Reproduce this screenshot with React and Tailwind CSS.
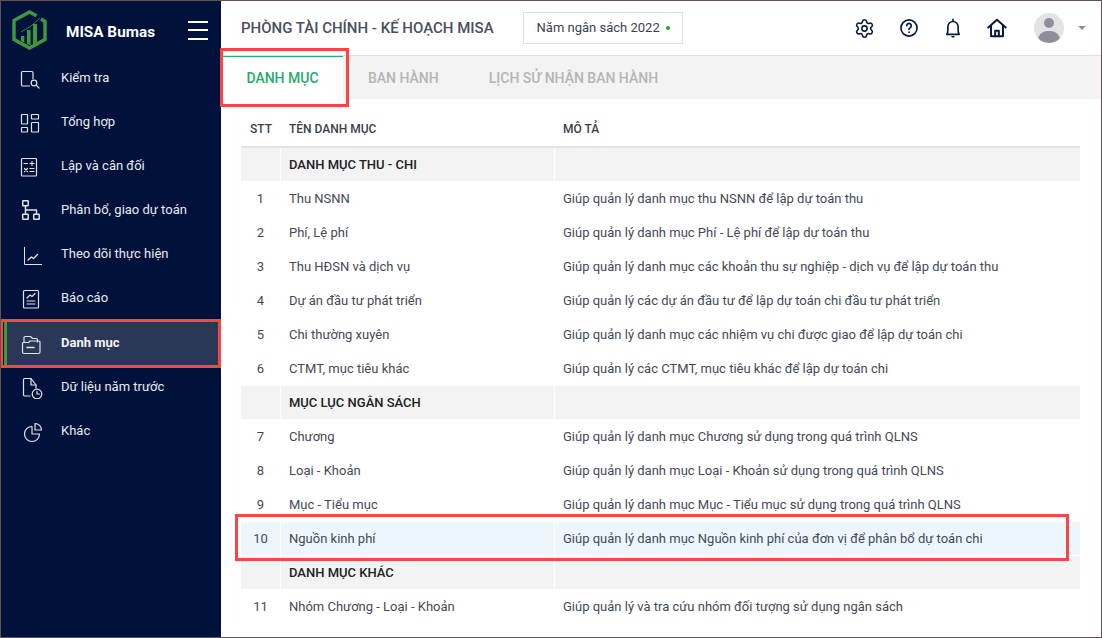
import React from "react";
import { Settings } from "lucide-react";

const I = ({ children, size = 24, sw = 1.2 }) => (
  <svg width={size} height={size} viewBox="0 0 24 24" fill="none" stroke="currentColor" strokeWidth={sw} strokeLinecap="round" strokeLinejoin="round" className="block">
    {children}
  </svg>
);

const menu = [
  ["Kiểm tra", <I key="a"><path d="M10.500 20H3.500A1.300 1.300 0 0 1 2.500 18.700V6.300A1.300 1.300 0 0 1 3.500 5.500h9.500A1.300 1.300 0 0 1 14 6.800v6" /><circle cx="15" cy="17" r="2.800" /><path d="m17.200 19.200 2.800 2.800" /></I>],
  ["Tổng hợp", <I key="b"><rect x="2.500" y="4.500" width="6" height="9.500" rx=".4" /><rect x="12.500" y="4.500" width="7" height="4.500" rx=".4" /><rect x="2.500" y="17.500" width="6" height="4.500" rx=".4" /><rect x="12.500" y="12.500" width="7" height="9.500" rx=".4" /></I>],
  ["Lập và cân đối", <I key="c"><rect x="2.500" y="4.500" width="15" height="17.500" rx=".8" /><path d="M5 9.500h3.500M11 9.500h4M13 7.500v4M5.500 14.500l3 3M8.500 14.500l-3 3M11 14.500h4M11 17.500h4" /></I>],
  ["Phân bổ, giao dự toán", <I key="d" sw={1.500}><rect x="3.700" y="2.700" width="5.500" height="5" rx=".5" /><rect x="3.700" y="16.300" width="5.500" height="5" rx=".5" /><rect x="14.700" y="16.300" width="5.500" height="5" rx=".5" /><path d="M6.500 7.700v8.600M6.500 12h11v4.300" /></I>],
  ["Theo dõi thực hiện", <I key="e" sw={1}><path d="M5.500 5v17.500h17.500" strokeLinecap="butt" /><path d="M9 18l3.500-3 2 1.500 4-4" strokeWidth={1.300} /></I>],
  ["Báo cáo", <I key="f"><rect x="4.500" y="4.500" width="15" height="17.500" rx=".9" /><path d="M8 12l3-3 2 1.500 3-3M8 15h8M8 18h8" /></I>],
  ["Danh mục", <I key="g"><path d="M5 11V6.800a1.300 1.300 0 0 1 1.300-1.300h5.200l2 2h3.800a1.300 1.300 0 0 1 1.200 1.300v2.200" /><path d="M3.500 21V12.500a1 1 0 0 1 1-1h5l1.500-1.500h9a1 1 0 0 1 1 1v10a1.500 1.500 0 0 1-1.500 1.500H5A1.500 1.500 0 0 1 3.500 21Z" /><path d="M8 16.500h7" strokeWidth={1.500} /></I>],
  ["Dữ liệu năm trước", <I key="h"><path d="M11 21H5.500A1.500 1.500 0 0 1 4.500 19.700V4.500A1.500 1.500 0 0 1 6 3.500h6l5 6.500v3" /><path d="M12 3.500v6.500h5" /><circle cx="18" cy="19" r="4.800" /><path d="M18 16.300V19h2.500" /></I>],
  ["Khác", <I key="i"><path d="M13 7.500a7.500 7.500 0 1 0 7.500 7.500H13V7.500Z" /><path d="M16 4.500a6.500 6.500 0 0 1 6.500 6.500H16V4.500Z" /></I>],
];

const rows = [
  { g: "DANH MỤC THU - CHI" },
  { n: 1, t: "Thu NSNN", d: "Giúp quản lý danh mục thu NSNN để lập dự toán thu" },
  { n: 2, t: "Phí, Lệ phí", d: "Giúp quản lý danh mục Phí - Lệ phí để lập dự toán thu" },
  { n: 3, t: "Thu HĐSN và dịch vụ", d: "Giúp quản lý danh mục các khoản thu sự nghiệp - dịch vụ để lập dự toán thu" },
  { n: 4, t: "Dự án đầu tư phát triển", d: "Giúp quản lý các dự án đầu tư để lập dự toán chi đầu tư phát triển" },
  { n: 5, t: "Chi thường xuyên", d: "Giúp quản lý danh mục các nhiệm vụ chi được giao để lập dự toán chi" },
  { n: 6, t: "CTMT, mục tiêu khác", d: "Giúp quản lý các CTMT, mục tiêu khác để lập dự toán chi" },
  { g: "MỤC LỤC NGÂN SÁCH" },
  { n: 7, t: "Chương", d: "Giúp quản lý danh mục Chương sử dụng trong quá trình QLNS" },
  { n: 8, t: "Loại - Khoản", d: "Giúp quản lý danh mục Loại - Khoản sử dụng trong quá trình QLNS" },
  { n: 9, t: "Mục - Tiểu mục", d: "Giúp quản lý danh mục Mục - Tiểu mục sử dụng trong quá trình QLNS" },
  { n: 10, t: "Nguồn kinh phí", d: "Giúp quản lý danh mục Nguồn kinh phí của đơn vị để phân bổ dự toán chi", hl: true },
  { g: "DANH MỤC KHÁC" },
  { n: 11, t: "Nhóm Chương - Loại - Khoản", d: "Giúp quản lý và tra cứu nhóm đối tượng sử dụng ngân sách" },
];

function Logo() {
  return (
    <svg width="36" height="40" viewBox="0 0 36 40" fill="none" className="block shrink-0">
      <path d="M24.500 5.800 17.500 2 2 10.500V29.500L17.500 38 33 29.500V11.500L29 9" stroke="#3f9a3f" strokeWidth="3.400" />
      <path d="M9 26h3.300v6.500L9 31zM15 20h3.600v15.500L15 34zM21 14h4v18l-4 2.500z" fill="#3f9a3f" />
      <path d="M9 22l10-6 9-8" stroke="#3f9a3f" strokeWidth="0.800" />
    </svg>
  );
}

export default function App() {
  return (
    <div className="relative w-[1102px] h-[638px] overflow-hidden flex bg-white border border-[#5f5353] font-['Roboto',sans-serif] text-[13px] text-[#212121]">
      <aside className="w-[220px] shrink-0 bg-[#00123b] text-white flex flex-col">
        <div className="h-[55px] shrink-0 flex items-center pl-[11px] pr-[13px]">
          <div className="mt-[2px]"><Logo /></div>
          <span className="ml-[18px] text-[15.300px] font-bold mt-[7px]">MISA Bumas</span>
          <div className="ml-auto flex flex-col gap-[6.500px] mt-[3px]">
            <span className="block w-5 h-[2px] bg-white" />
            <span className="block w-5 h-[2px] bg-white" />
            <span className="block w-5 h-[2px] bg-white" />
          </div>
        </div>
        <nav className="flex flex-col">
          {menu.map(([label, icon]) =>
            label === "Danh mục" ? (
              <div key={label} className="h-[46px] -mb-[1px] mx-[3px] pl-[12px] flex items-center gap-[18px] bg-[#2b3757] border-l-[3px] border-[#3f9a3f] font-bold text-[#f2f4f7]">
                <span className="w-[24px] flex justify-center text-[#dfe3ea]">{icon}</span>
                {label}
              </div>
            ) : (
              <div key={label} className="h-[44px] pl-[18px] flex items-center gap-[18px] text-[#e8ebf0]">
                <span className="w-[24px] flex justify-center text-[#dfe3ea]">{icon}</span>
                {label}
              </div>
            )
          )}
        </nav>
      </aside>

      <main className="flex-1 min-w-0 flex flex-col">
        <header className="h-[55px] shrink-0 border-b border-[#e0e0e0] flex items-center pl-[20px] pr-[15px]">
          <span className="text-[15px] font-medium text-[#4a4f5c]">PHÒNG TÀI CHÍNH - KẾ HOẠCH MISA</span>
          <div className="ml-[29px] h-[32px] w-[160px] border border-[#e0e0e0] flex items-center pl-[13px] text-[#3c4152]">
            Năm ngân sách 2022
            <span className="ml-[6px] w-[4px] h-[4px] rounded-full bg-[#1aa81a]" />
          </div>
          <div className="ml-auto flex items-center text-[#0a1a3c]">
            <Settings size={21} strokeWidth={1.800} className="block" />
            <span className="ml-[23px]" />
            <I size={22} sw={1.800}>
              <circle cx="12" cy="12" r="8.800" />
              <path d="M9.500 9.500a2.500 2.500 0 1 1 3.800 2.200c-.9.500-1.300 1-1.300 2" />
              <path d="M12 16.500v.3" />
            </I>
            <span className="ml-[22px]" />
            <I size={22} sw={1.800}>
              <path d="M5.200 19c.8-1 1.200-2.500 1.200-4.500v-4a5.600 5.600 0 0 1 11.200 0v4c0 2 .4 3.500 1.200 4.500Z" />
              <path d="M11 21.500h2M12 2.500v2" />
            </I>
            <span className="ml-[22px]" />
            <I size={22} sw={2.200}>
              <path d="M2.500 11.500 12 3l9.500 8.500" />
              <path d="M5.500 9.500V21h13V9.500" />
              <path d="M10 21v-6h4v6" />
            </I>
            <span className="ml-[26px] w-[30px] h-[30px] rounded-full bg-[#e3e3e5] relative overflow-hidden block">
              <span className="absolute left-[10px] top-[5px] w-[10px] h-[10px] rounded-full bg-[#8f8f9b]" />
              <span className="absolute left-[4px] top-[18px] w-[22px] h-[18px] rounded-full bg-[#8f8f9b]" />
            </span>
            <span className="ml-[14px] w-0 h-0 border-x-[4px] border-x-transparent border-t-[4px] border-t-[#8f8f9b]" />
          </div>
        </header>

        <div className="h-[43px] shrink-0 bg-[#f3f3f3] flex">
          <div className="ml-[1px] w-[121px] bg-white border-t border-[#26ad6b] flex items-center justify-center text-[14px] font-medium text-[#26ad6b] h-[44px]">DANH MỤC</div>
          <div className="ml-[25px] flex items-center text-[14px] font-medium text-[#b5b5b5] pt-[1px]">BAN HÀNH</div>
          <div className="ml-[50px] flex items-center text-[14px] font-medium text-[#b5b5b5] pt-[1px]">LỊCH SỬ NHẬN BAN HÀNH</div>
        </div>

        <div className="pl-[20px] pr-[21px] pt-[13px]">
          <div className="flex h-[36px] items-center border-b-2 border-[#e4e4e4] text-[12px] font-medium text-[#3a3f4a]">
            <div className="w-[40px] text-center">STT</div>
            <div className="w-[274px] pl-[8px]">TÊN DANH MỤC</div>
            <div className="pl-[8px]">MÔ TẢ</div>
          </div>
          {rows.map((r, i) =>
            r.g ? (
              <div key={i} className="flex h-[34px] gap-[1px] border-b border-white">
                <div className="w-[39px] bg-[#f3f3f3]" />
                <div className="w-[273px] bg-[#f3f3f3] pl-[8px] flex items-center text-[13px] font-medium text-[#212121]">{r.g}</div>
                <div className="flex-1 bg-[#f3f3f3]" />
              </div>
            ) : (
              <div key={i} className="flex h-[34px] gap-[1px] border-b border-white text-[#444a55]">
                <div className={"w-[39px] flex items-center justify-center " + (r.hl ? "bg-[#edf6fd]" : "")}>{r.n}</div>
                <div className={"w-[273px] pl-[8px] flex items-center " + (r.hl ? "bg-[#edf6fd]" : "")}>{r.t}</div>
                <div className={"flex-1 pl-[8px] flex items-center " + (r.hl ? "bg-[#edf6fd]" : "")}>{r.d}</div>
              </div>
            )
          )}
        </div>
      </main>

      <div className="absolute left-[-1px] top-[318px] w-[221px] h-[49px] border-[3px] border-[#fb4444] pointer-events-none" />
      <div className="absolute left-[219px] top-[47px] w-[129px] h-[59px] border-[3px] border-[#fb4444] pointer-events-none" />
      <div className="absolute left-[234px] top-[513px] w-[834px] h-[47px] border-[3px] border-[#fb4444] pointer-events-none" />
    </div>
  );
}
